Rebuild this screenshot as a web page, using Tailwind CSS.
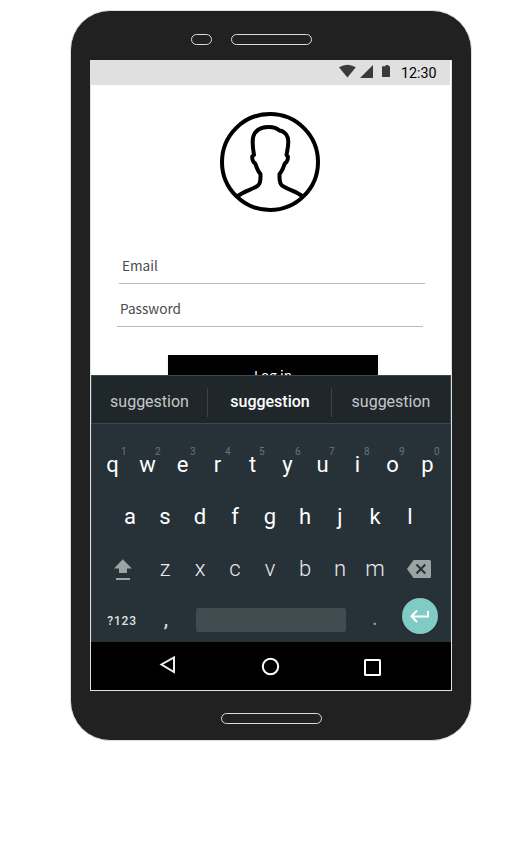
<!DOCTYPE html>
<html lang="en">
<head>
<meta charset="utf-8">
<title>Log in</title>
<script src="https://cdn.jsdelivr.net/npm/@tailwindcss/browser@4"></script>
</head>
<body class="bg-white w-[521px] h-[850px] overflow-hidden font-['Roboto',sans-serif]">
<main class="ml-[70px] pt-[10px]">
<div class="w-[402px] h-[731px] rounded-[40px] border border-[#dcdfdf] bg-[#212121] flex flex-col">
  <div class="h-[49px] shrink-0 pt-[23px] pl-[119.500px] flex gap-[19px]">
    <span class="w-[21px] h-[11px] rounded-full border border-[#dcdcdc]"></span>
    <span class="w-[81px] h-[11px] rounded-full border border-[#dcdcdc]"></span>
  </div>
  <div class="ml-[19px] w-[362px] h-[631px] shrink-0 border border-[#e0e0e0] bg-white flex flex-col">
    <div class="h-6 w-[359px] bg-[#e0e0e0] shrink-0 flex pl-[247px]">
      <svg class="w-[100px] h-6 -ml-px -mt-px mr-[-36px] shrink-0" viewBox="0 0 100 24" fill="#3a3a3a">
        <path d="M2 7.2Q10.400 2.200 18.800 7.200L10.400 17.500Z"/>
        <path d="M36 5V18H23Z"/>
        <path d="M47 6.200h1.500V5h3v1.200H53V17h-8V6.200Z"/>
      </svg>
      <span class="text-[14.300px] leading-[25px] text-black whitespace-nowrap">12:30</span>
    </div>
    <div class="h-[290px] shrink-0 overflow-hidden font-['Noto_Sans_CJK_SC',sans-serif] text-[13.600px] text-[#4a4a4a]">
      <svg class="w-[102px] h-[102px] ml-[128px] mt-[26px]" viewBox="219 111 102 102" fill="none" stroke="#000" stroke-width="4" stroke-linejoin="round">
        <circle cx="270" cy="162" r="48"/>
        <path d="M237.500 196.500C242 191.500 253 189.500 258 185.500C261 183 260.500 179 260.500 174C257.500 171 256.500 167 255.200 163.300C253 162.500 252 159 252.300 156.300L254 155C252.800 148 252 141 253.300 136.500C255.500 129.500 261.500 127 269 127C274 127 277 128.300 279.500 130.500C285 131.500 288.300 136 288.300 141.500C288.300 147 287.300 150 286.500 155L287.800 156.300C288.300 159 287 162.500 284.800 163.300C283.500 167 282.500 171 279.500 174C279.500 179 279 183 282 185.500C287 189.500 298 191.500 302.500 196.500"/>
      </svg>
      <div class="ml-7 mt-[38px] w-[306px] h-[33px] pl-[3px] border-b border-[#b9b9b9] leading-[28px]">Email</div>
      <div class="ml-[26px] mt-[10px] w-[306px] h-[33px] pl-[3px] border-b border-[#b9b9b9] leading-[28px]">Password</div>
      <div class="ml-[77px] mt-7 w-[210px] h-10 bg-black text-white text-center leading-10 shadow">Log in</div>
    </div>
    <div class="h-[267px] shrink-0 bg-[#263238] text-white">
      <div class="h-[49px] border border-[#3c4a50] bg-[#20272a] flex items-center text-[16px] text-[#c4c8c9] text-center">
        <span class="w-[115px] pt-1">suggestion</span>
        <span class="w-px h-[29px] mt-[5px] bg-[#3a4448]"></span>
        <span class="w-[123px] pt-1 pl-px font-medium text-white">suggestion</span>
        <span class="w-px h-[29px] mt-[5px] bg-[#3a4448]"></span>
        <span class="w-[118px] pt-1">suggestion</span>
      </div>
      <div class="h-[218px] pt-[15px] text-[22px] leading-[52px] text-center border-x border-[#2d3f45]">
        <div class="flex ml-[3px] *:w-[35px] *:relative [&_i]:absolute [&_i]:left-[26px] [&_i]:top-[7px] [&_i]:text-[10px] [&_i]:leading-3 [&_i]:not-italic [&_i]:text-[#6a7377]">
          <span>q<i>1</i></span><span>w<i class="-ml-px">2</i></span><span>e<i class="-ml-px">3</i></span><span>r<i class="-ml-px">4</i></span><span>t<i class="-ml-[2px]">5</i></span><span>y<i class="-ml-px">6</i></span><span>u<i class="-ml-[2px]">7</i></span><span>i<i class="-ml-[2px]">8</i></span><span>o<i class="-ml-[2px]">9</i></span><span>p<i class="-ml-[2px]">0</i></span>
        </div>
        <div class="flex ml-[20.500px] *:w-[35px]">
          <span>a</span><span>s</span><span>d</span><span>f</span><span>g</span><span>h</span><span>j</span><span>k</span><span>l</span>
        </div>
        <div class="flex ml-[20px] font-light text-[#e8eaeb] *:w-[35px]">
          <svg class="-ml-[7px] mr-[7.500px] h-[52px]" viewBox="105 543 35 52" fill="#9ca3a5"><path d="M122.800 559.200L131.800 568.500H127V573H119V568.500H114ZM116 578h14v2h-14Z"/></svg>
          <span>z</span><span>x</span><span>c</span><span>v</span><span>b</span><span>n</span><span>m</span>
          <svg class="ml-[9.500px] h-[52px]" viewBox="402 543 35 52"><path d="M413.500 560H429.500Q431 560 431 561.500V576.500Q431 578 429.500 578H413.500L407 569Z" fill="#9ca3a5"/><path d="M416.500 564.500l8.800 9M425.300 564.500l-8.800 9" stroke="#263238" stroke-width="2"/></svg>
        </div>
        <div class="flex h-[47px]">
          <span class="w-[60px] text-[12px] font-medium tracking-[.8px] leading-[52px] text-[#dfe2e3]">?123</span>
          <span class="w-[28px] leading-[48px] text-[#dfe2e3]">,</span>
          <span class="w-[150px] h-6 mt-[13px] ml-4 rounded-[2px] bg-[#414c51]"></span>
          <span class="w-[30px] ml-[14px] leading-[46px] text-[#9aa2a5]">.</span>
          <svg class="w-9 h-9 mt-[3px] ml-3 rounded-full bg-[#80cbc4] shadow-sm" viewBox="0 0 36 36" fill="none" stroke="#fff" stroke-width="2"><path d="M26 13V18.500H10M15 12.500L9.500 18.200L15 24"/></svg>
        </div>
      </div>
    </div>
    <div class="h-12 shrink-0 bg-black">
      <svg class="w-[360px] h-12" viewBox="91 642 360 48" fill="none" stroke="#fff" stroke-width="2">
        <path d="M174 657.500V672L161.500 664.500Z" stroke="#eee"/>
        <circle cx="270.500" cy="666.500" r="7.700"/>
        <rect x="365" y="660" width="15" height="15" rx=".5"/>
      </svg>
    </div>
  </div>
  <div class="mx-auto mt-[22px] w-[101px] h-[11px] shrink-0 rounded-full border border-[#dcdcdc]"></div>
</div>
</main>
</body>
</html>
